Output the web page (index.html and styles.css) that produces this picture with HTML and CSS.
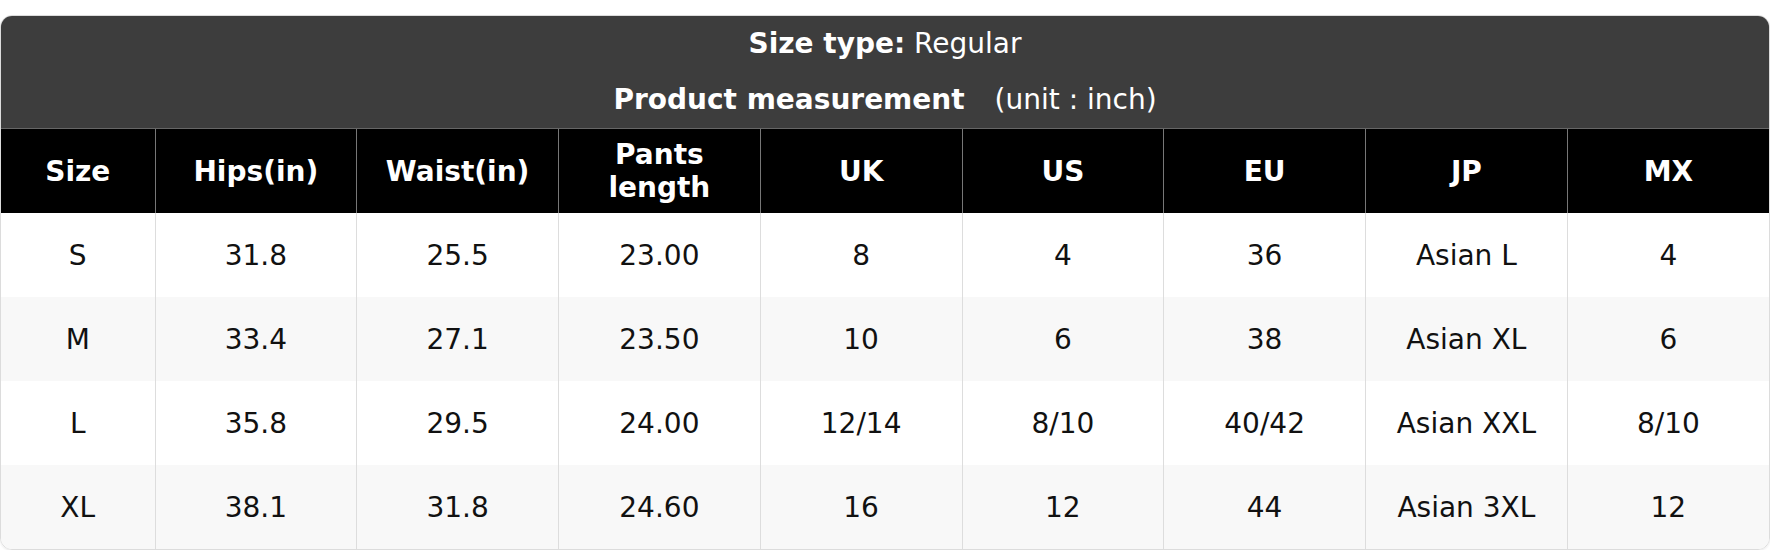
FILE: index.html
```html
<!DOCTYPE html>
<html lang="en">
<head>
<meta charset="utf-8">
<title>Size chart</title>
<link rel="stylesheet" href="styles.css">
</head>
<body>
<div class="chart">
  <div class="chart-head">
    <div class="head-line"><b>Size type:</b> Regular</div>
    <div class="head-line"><b>Product measurement</b><span class="unit">(unit : inch)</span></div>
  </div>
  <table class="size-table">
    <colgroup>
      <col class="col-size">
      <col><col><col><col><col><col><col><col>
    </colgroup>
    <thead>
      <tr>
        <th>Size</th><th>Hips(in)</th><th>Waist(in)</th><th>Pants length</th><th>UK</th><th>US</th><th>EU</th><th>JP</th><th>MX</th>
      </tr>
    </thead>
    <tbody>
      <tr><td>S</td><td>31.8</td><td>25.5</td><td>23.00</td><td>8</td><td>4</td><td>36</td><td>Asian L</td><td>4</td></tr>
      <tr><td>M</td><td>33.4</td><td>27.1</td><td>23.50</td><td>10</td><td>6</td><td>38</td><td>Asian XL</td><td>6</td></tr>
      <tr><td>L</td><td>35.8</td><td>29.5</td><td>24.00</td><td>12/14</td><td>8/10</td><td>40/42</td><td>Asian XXL</td><td>8/10</td></tr>
      <tr><td>XL</td><td>38.1</td><td>31.8</td><td>24.60</td><td>16</td><td>12</td><td>44</td><td>Asian 3XL</td><td>12</td></tr>
    </tbody>
  </table>
</div>
</body>
</html>
```
FILE: styles.css
```css
html, body {
  margin: 0;
  background: #fff;
}
body {
  padding-top: 15px;
  font-family: "DejaVu Sans", "Liberation Sans", sans-serif;
  font-size: 28px;
}
.chart {
  border: 1px solid #dcdcdc;
  border-radius: 12px;
  overflow: hidden;
  box-shadow: 0 1px 2px rgba(0, 0, 0, 0.08);
}
.chart-head {
  background: #3d3d3d;
  color: #fff;
  text-align: center;
}
.head-line {
  height: 56px;
  line-height: 56px;
  white-space: nowrap;
}
.head-line b {
  font-weight: bold;
}
.unit {
  margin-left: 30px;
}
.size-table {
  width: 100%;
  border-collapse: collapse;
  table-layout: fixed;
  font-size: 28px;
}
.col-size {
  width: 154px;
}
.size-table th {
  background: #000;
  color: #fff;
  font-weight: bold;
  height: 84px;
  padding: 0 10px;
  border-top: 1px solid #666;
  border-left: 1px solid #777;
  text-align: center;
  vertical-align: middle;
}
.size-table td {
  height: 84px;
  padding: 0 10px;
  border-left: 1px solid #ddd;
  color: #111;
  text-align: center;
  vertical-align: middle;
}
.size-table th:first-child,
.size-table td:first-child {
  border-left: none;
}
.size-table tbody tr:nth-child(even) td {
  background: #f8f8f8;
}
```
